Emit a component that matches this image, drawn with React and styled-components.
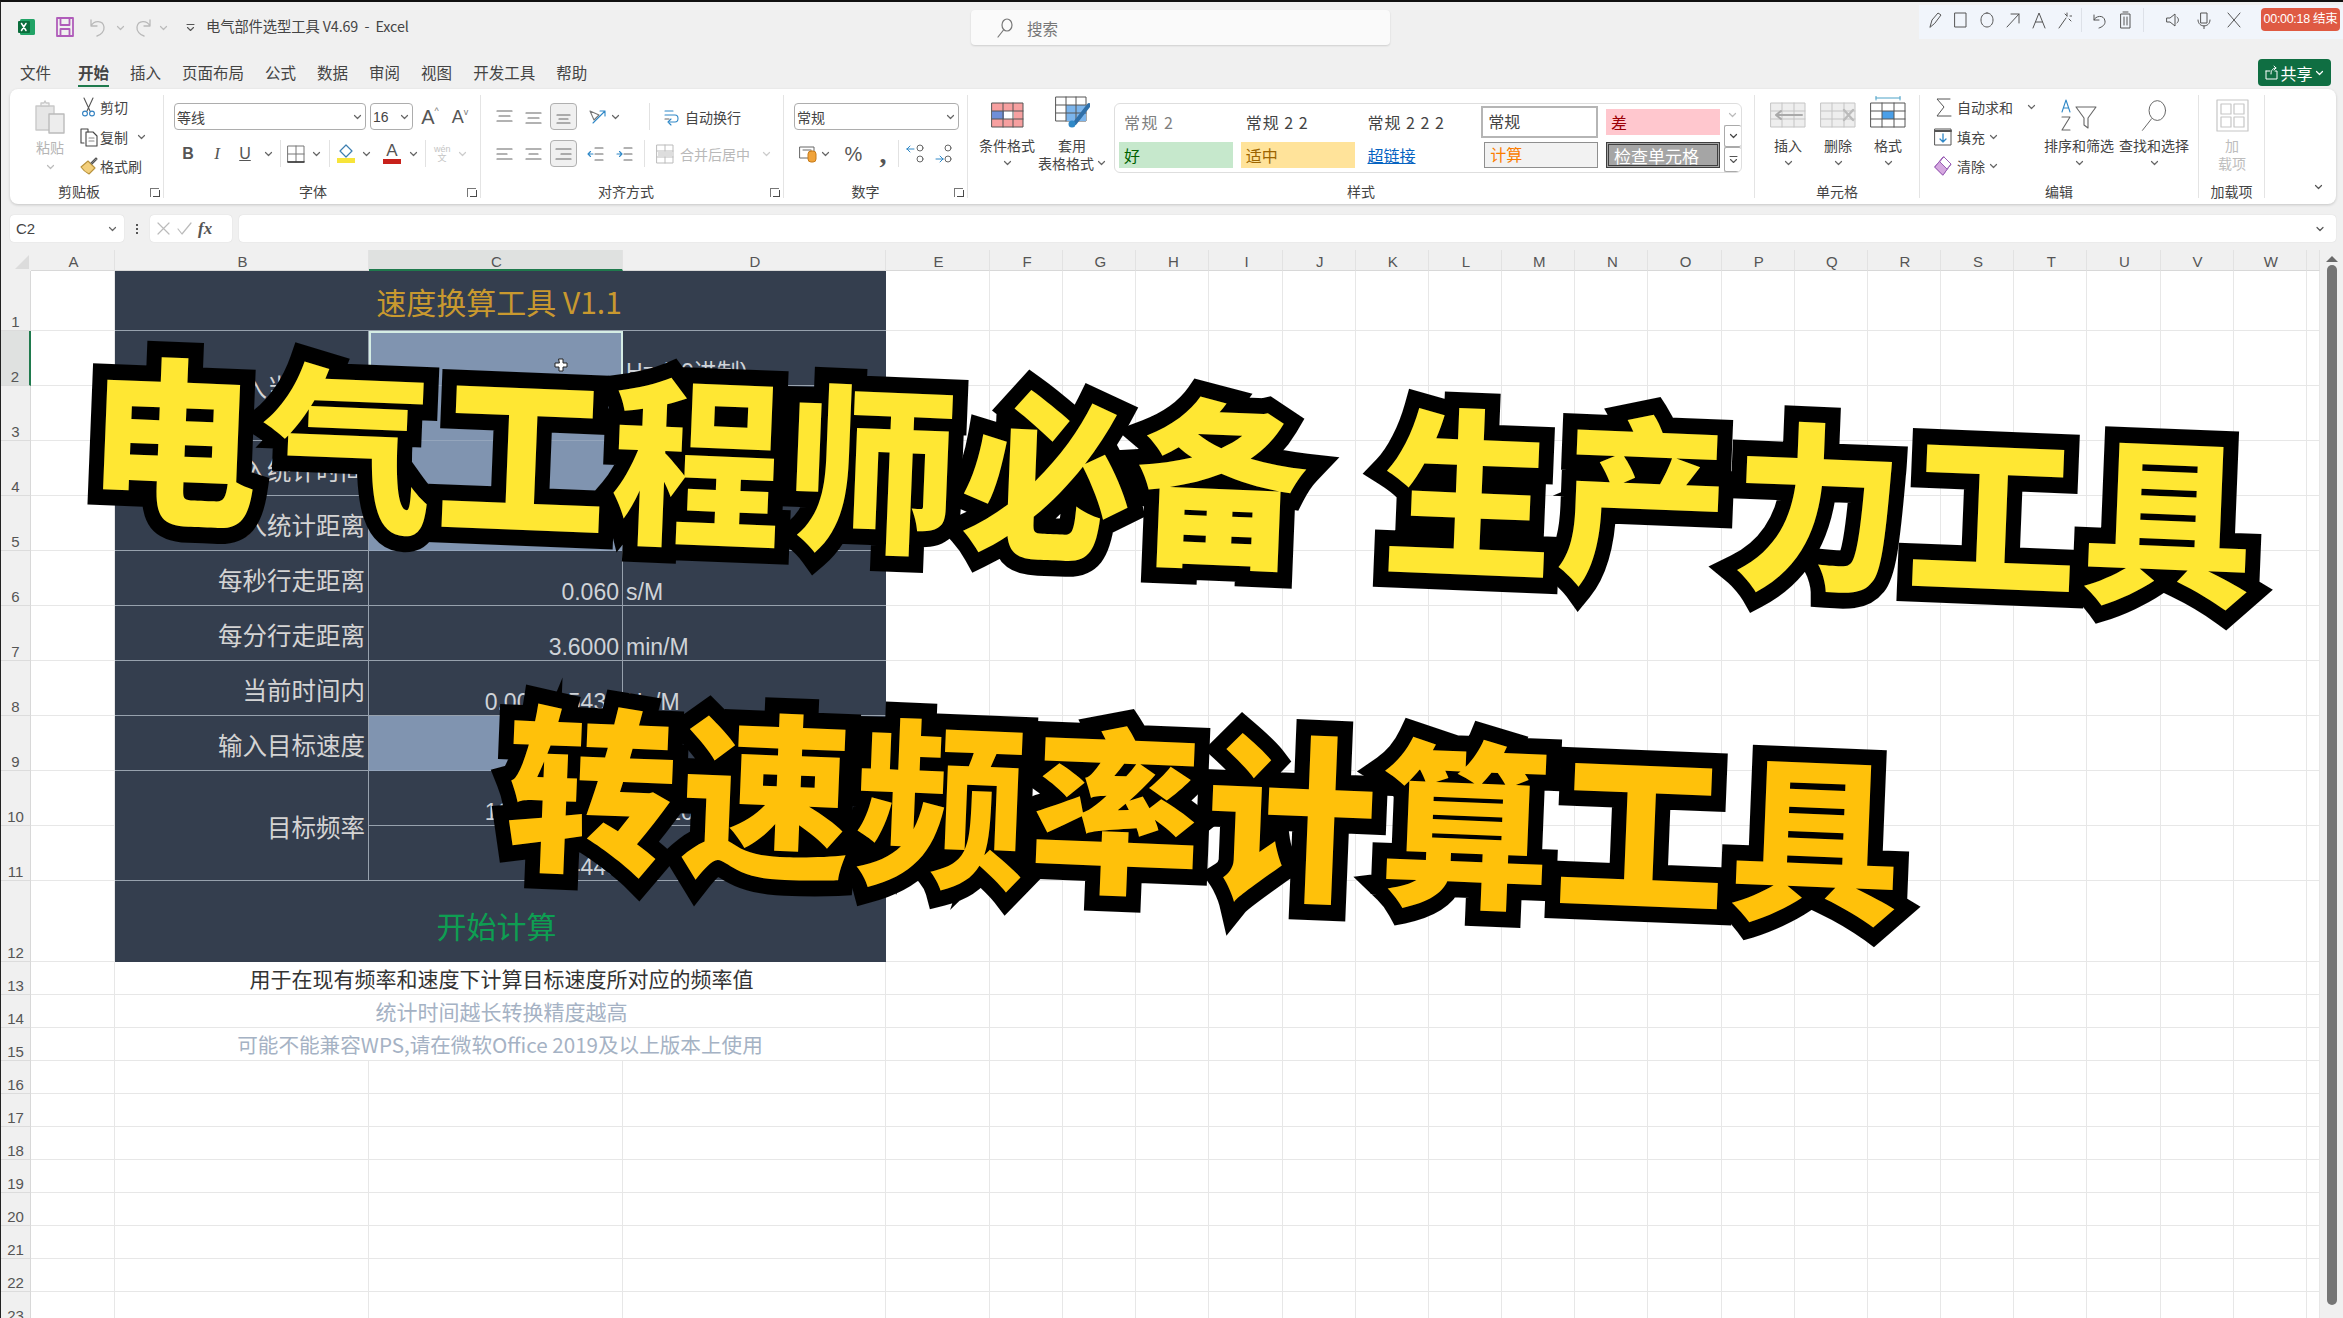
import React from "react";
import styled, { createGlobalStyle } from "styled-components";

const CJK = `"Noto Sans CJK SC", "Liberation Sans", sans-serif`;
const LATIN = `"Liberation Sans", "Noto Sans CJK SC", sans-serif`;

const Global = createGlobalStyle`
  html, body { margin: 0; padding: 0; width: 2343px; height: 1318px; overflow: hidden; background: #f0f0f0; }
  body { font-family: ${CJK}; color: #333; }
  * { box-sizing: border-box; }
`;

const Page = styled.div`
  position: relative; width: 2343px; height: 1318px; overflow: hidden;
  background: #f0f0f0; border-left: 1px solid #222; border-top: 2px solid #111;
  display: flex; flex-direction: column;
`;

/* ---------- icons ---------- */
const Svg = styled.svg`display: block; flex: none;`;
const Ic = ({ w = 18, h = 18, c = "#555", sw = 1.2, children, vb }) => (
  <Svg width={w} height={h} viewBox={vb || `0 0 ${w} ${h}`} fill="none" stroke={c} strokeWidth={sw} strokeLinecap="round" strokeLinejoin="round">{children}</Svg>
);
const Chev = ({ c = "#666", w = 9 }) => (
  <Ic w={w} h={6} c={c} sw={1.2} vb="0 0 9 6"><path d="M1.5 1.5 4.5 4.5 7.5 1.5" /></Ic>
);
const ExcelLogo = () => (
  <Ic w={20} h={20} sw={2}>
    <rect x="2" y="2" width="15" height="16" rx="1.5" fill="#21a366" stroke="none" />
    <rect x="0" y="4" width="12" height="12" rx="1" fill="#0b6e3c" stroke="none" />
    <path d="M3.5 6.5 8 13.5M8 6.5 3.5 13.5" stroke="#fff" strokeWidth="1.5" />
  </Ic>
);
const SaveIco = () => (
  <Ic w={20} h={20} c="#b05cba" sw={1.8}>
    <path d="M2 1h16v18H2z" /><path d="M5.5 1v7h9V1M5.5 19v-7h9v7" />
  </Ic>
);
const UndoIco = ({ flip }) => (
  <Ic w={18} h={20} c="#b9b9b9" sw={1.3}>
    <g transform={flip ? "translate(18 0) scale(-1 1)" : undefined}>
      <path d="M2 3v6h6M2 9c3-6 12-6 13 1 .6 4-3 8-7 9" />
    </g>
  </Ic>
);
const QatIco = () => (
  <Ic w={9} h={9} c="#555" sw={1.1}><path d="M1 1.5h7M1.5 4.5 4.5 7.5 7.5 4.5" /></Ic>
);
const SearchIco = ({ w = 16, h = 20, sw = 1.2, c = "#777" }) => (
  <Ic w={w} h={h} c={c} sw={sw} vb="0 0 16 20">
    <ellipse cx="10" cy="7" rx="5" ry="6" /><path d="M6.5 12 1 19" />
  </Ic>
);
const PasteIco = () => (
  <Ic w={32} h={34} c="#c9c9c9" sw={1.4}>
    <path d="M2 6h18v24H2z" fill="#e6e6e6" /><path d="M7 6V3h3l1-2 1 2h3v3z" fill="#f4f4f4" />
    <path d="M15 14h15v19H15z" fill="#ededed" stroke="#bbb" />
  </Ic>
);
const ScissorIco = () => (
  <Ic w={15} h={20} c="#555" sw={1.1}>
    <path d="M3 1 9 14M12 1 6 14" /><circle cx="4" cy="16.5" r="2.4" stroke="#2f7fc0" /><circle cx="11" cy="16.5" r="2.4" stroke="#2f7fc0" />
  </Ic>
);
const CopyIco = () => (
  <Ic w={18} h={20} c="#444" sw={1.1}>
    <path d="M4 16H1V2h7v3" /><path d="M6 5h7l4 4v10H6z" /><path d="M9 11h5M9 14h5" stroke="#888" />
  </Ic>
);
const BrushIco = () => (
  <Ic w={18} h={18} c="#555" sw={1.1}>
    <path d="M1 10 8 4l7 7-6 6c-2-1-6-4-8-7z" fill="#f3cf7b" stroke="#b8923c" /><path d="M11 6l5-5 1 1-5 5" />
  </Ic>
);
const BordersIco = () => (
  <Ic w={18} h={18} c="#777" sw={1}>
    <path d="M1 1h16v16H1zM9 1v16M1 9h16" /><path d="M1 17h16" stroke="#333" strokeWidth="1.6" />
  </Ic>
);
const FillIco = () => (
  <Ic w={18} h={19} c="#3d7fb0" sw={1.2}>
    <path d="M9 1 3 7l6 6 6-6z" /><rect x="0" y="14" width="18" height="5" fill="#f7e43a" stroke="none" />
  </Ic>
);
const AlignIco = ({ lines, c = "#666" }) => (
  <Ic w={17} h={16} c={c} sw={1.2}>{lines.map((l, i) => <path key={i} d={`M${l[0]} ${l[2]}H${l[1]}`} />)}</Ic>
);
const T3 = [[1, 16, 2], [3, 14, 7], [1, 16, 12]];
const IndentIco = ({ c }) => (
  <Ic w={17} h={16} c="#666" sw={1.1}>
    <path d="M8 2h8M8 8h8M8 14h8" /><path d={c} stroke="#2f88c7" />
  </Ic>
);
const OrientIco = () => (
  <Ic w={20} h={18} c="#777" sw={1.1}><path d="M3 3l9 4-5 5z" /><path d="M6 15 18 3M18 3h-5M18 3v5" stroke="#2f88c7" /></Ic>
);
const WrapIco = () => (
  <Ic w={16} h={20} c="#666" sw={1.1}><path d="M2 4h8M2 8h10c4 0 4 7 0 7H6" stroke="#2f88c7" /><path d="M8 12 5 15l3 3" stroke="#2f88c7" /><path d="M2 12h4" /></Ic>
);
const MergeIco = () => (
  <Ic w={18} h={20} c="#bbb" sw={1}><path d="M1 1h16v18H1zM1 7h16M1 13h16M9 1v6M9 13v6" /><rect x="2" y="8" width="14" height="4" fill="#ddd" stroke="none" /></Ic>
);
const AccIco = () => (
  <Ic w={19} h={20} c="#666" sw={1}>
    <path d="M1 3h14v11H1zM4 6h8" /><rect x="9" y="7" width="8" height="11" rx="3" fill="#f0a33a" stroke="#c77a18" />
  </Ic>
);
const DecIco = ({ rev }) => (
  <Ic w={19} h={22} c="#666" sw={1}>
    {rev ? <path d="M9 6H2M2 6l3-3M2 6l3 3" stroke="#2f88c7" /> : <path d="M2 16h7M9 16l-3-3M9 16l-3 3" stroke="#2f88c7" />}
    <circle cx={rev ? 15 : 14} cy={5} r="3" /><circle cx={rev ? 15 : 14} cy="16" r="3" />
  </Ic>
);
const CondIco = () => (
  <Ic w={33} h={26} c="#555" sw={1}>
    <rect x="1" y="1" width="31" height="24" fill="#f7a0a0" /><rect x="1" y="9" width="12" height="8" fill="#6f8fd8" stroke="none" /><rect x="13" y="9" width="10" height="8" fill="#fff" stroke="none" />
    <path d="M12 1v24M22 1v24M1 9h31M1 17h31" />
  </Ic>
);
const TableIco = () => (
  <Ic w={35} h={32} c="#555" sw={1}>
    <rect x="1" y="1" width="30" height="24" fill="#fff" /><rect x="11" y="9" width="20" height="16" fill="#7cb5ec" stroke="none" />
    <path d="M11 1v24M21 1v24M1 9h30M1 17h30" />
    <path d="M34 9 20 27" stroke="#2f6fa8" strokeWidth="4" /><circle cx="17" cy="28" r="3.5" fill="#2f88c7" stroke="none" />
  </Ic>
);
const CellsIco = ({ kind }) => (
  <Ic w={36} h={kind === "fmt" ? 32 : 26} vb={kind === "fmt" ? "0 -6 36 32" : "0 0 36 26"} c={kind === "fmt" ? "#555" : "#c4c4c4"} sw={1}>
    {kind === "fmt" && <path d="M6 -4h24M6 -6v4M30 -6v4" stroke="#4da2c7" />}
    <rect x="1" y="1" width="34" height="24" fill={kind === "fmt" ? "#fff" : "#eee"} />
    {kind === "fmt" && <rect x="12" y="9" width="12" height="8" fill="#4a9fe8" stroke="none" />}
    <path d="M12 1v24M24 1v24M1 9h34M1 17h34" />
    {kind === "ins" && <path d="M32 13H6M6 13l5-4M6 13l5 4" stroke="#aaa" strokeWidth="2" />}
    {kind === "del" && <path d="M24 8l9 10M33 8l-9 10" stroke="#bbb" strokeWidth="2.4" />}
  </Ic>
);
const SigmaIco = () => (
  <Ic w={17} h={21} c="#555" sw={1}><path d="M15 2H2l7 8-7 9h14" /></Ic>
);
const FillDownIco = () => (
  <Ic w={18} h={20} c="#555" sw={1}><path d="M1 2h16v16H1z" /><path d="M1 4h16" strokeWidth="2" /><path d="M9 7v8M6 12l3 3 3-3" stroke="#2f88c7" strokeWidth="1.3" /></Ic>
);
const EraserIco = () => (
  <Ic w={18} h={20} c="#9a5fb5" sw={1}><path d="M10 1l7 7-8 11-8-8z" /><path d="M1 11l8-10 8 7-8 11z" fill="#d5a8e0" /><path d="M10 1l7 7-4 5-7-7z" fill="#fff" /></Ic>
);
const AddinIco = () => (
  <Ic w={33} h={33} c="#c6c6c6" sw={1.2}><rect x="1" y="1" width="31" height="31" /><rect x="5" y="5" width="10" height="10" /><rect x="18" y="5" width="10" height="10" /><rect x="5" y="18" width="10" height="10" /><rect x="18" y="18" width="10" height="10" /></Ic>
);
const ShareIco = () => (
  <Ic w={13} h={15} c="#fff" sw={1}><path d="M1 6h4M1 6v8h11V6h-2" /><path d="M6 9c0-4 2-6 5-6M9 1l2 2-2 2" /></Ic>
);
const Tool = ({ d, w = 16, h = 18, c = "#555" }) => (
  <Ic w={w} h={h} c={c} sw={1}><path d={d} /></Ic>
);
const PlusCursor = () => (
  <Ic w={14} h={14} c="#222" sw={1}><path d="M5 1h4v4h4v4H9v4H5V9H1V5h4z" fill="#fff" /></Ic>
);

/* ---------- title bar ---------- */
const TitleBar = styled.header`height: 48px; flex: none; display: flex; align-items: flex-start; padding: 15px 0 0 17px;`;
const QatGap = styled.span`width: ${p => p.$w}px; flex: none; display: flex; justify-content: center; padding-top: ${p => p.$pt || 0}px;`;
const DocTitle = styled.span`font-size: 14.3px; line-height: 18px; color: #444; width: 430px; letter-spacing: -.1px; white-space: pre; flex: none;`;
const SearchBox = styled.div`
  width: 419px; height: 35px; margin-top: -7px; background: #fafafa; border-radius: 4px;
  box-shadow: 0 1px 2px rgba(0,0,0,.14); display: flex; align-items: center; padding-left: 26px; gap: 14px;
  font-size: 15.5px; color: #777; flex: none;
`;
const RecBar = styled.div`
  margin: -12px 0 0 auto; width: 424px; height: 34px; background: #f1f5fb; display: flex; align-items: center;
  padding: 0 0 5px 10px; flex: none; position: relative;
`;
const RecSlot = styled.span`width: ${p => p.$w}px; display: flex; justify-content: center; flex: none; margin-left: ${p => p.$ml || 0}px;`;
const RecSep = styled.i`width: 1px; height: 24px; background: #dde1e8; flex: none; margin: 0 ${p => p.$m}px;`;
const Timer = styled.div`
  position: absolute; left: 342px; top: 3px; width: 79px; height: 23px; background: #df5a43; border-radius: 4px; color: #fff;
  font-size: 12.5px; line-height: 23px; text-align: center; white-space: nowrap; font-family: ${LATIN}; letter-spacing: -.3px;
`;

/* ---------- tabs ---------- */
const TabBar = styled.nav`height: 39px; flex: none; display: flex; align-items: flex-end; gap: 21px; padding: 0 12px 2px 19px; position: relative;`;
const Tab = styled.span`
  font-size: 15.5px; height: 27px; line-height: 24px; color: #444; position: relative; flex: none;
  margin-right: ${p => p.$mr || 0}px; font-weight: ${p => p.$on ? 700 : 400};
  &::after { content: ""; display: ${p => p.$on ? "block" : "none"}; position: absolute; left: 0; right: 0; bottom: 0; height: 2px; background: #1f7a4d; }
`;
const ShareBtn = styled.button`
  margin-left: auto; width: 73px; height: 27px; background: #0f6e42; border: 0; border-radius: 4px; color: #fff; font: 16px ${CJK};
  display: flex; align-items: center; justify-content: center; gap: 2px; padding: 0; margin-bottom: 1px; flex: none;
`;

/* ---------- ribbon ---------- */
const Ribbon = styled.section`
  height: 115px; flex: none; margin: 0 7px 0 9px; background: #fff; border-radius: 8px; box-shadow: 0 1px 3px rgba(0,0,0,.18);
  display: flex; padding: 6px 0 0;
`;
const Group = styled.div`
  width: ${p => p.$w}px; flex: none; height: 103px; border-right: 1px solid #e4e4e4; display: flex; flex-direction: column; position: relative;
`;
const Content = styled.div`height: 89px; flex: none; display: flex; padding-left: ${p => p.$pl || 0}px;`;
const GroupLabel = styled.div`height: 14px; line-height: 14px; text-align: center; font-size: 14px; color: #444; position: relative; padding-right: ${p => p.$pr || 0}px;`;
const Launcher = styled.span`
  position: absolute; right: 4px; bottom: 1px; width: 9px; height: 9px; border: 1px solid #777; border-width: 1px 0 0 1px;
  &::after { content: ""; position: absolute; right: -1px; bottom: 0; width: 6px; height: 6px; border: 1px solid #4a4a4a; border-width: 0 1px 1px 0; }
`;
const PasteCol = styled.div`
  width: 60px; display: flex; flex-direction: column; align-items: center; padding-top: 5px; font-size: 14px; color: #b5b5b5; flex: none;
  span { line-height: 20px; margin: 3px 0 7px; }
`;
const SmallList = styled.div`width: ${p => p.$w}px; flex: none; display: flex; flex-direction: column; gap: 9.5px; padding-top: 2px;`;
const SmallRow = styled.div`height: 20px; display: flex; align-items: center; font-size: 14px; color: #444; line-height: 20px; white-space: nowrap;`;
const SmallIcon = styled.span`width: ${p => p.$w || 20}px; margin-right: ${p => p.$mr || 0}px; display: flex; justify-content: center; flex: none;`;
const RowChev = styled.span`margin-left: ${p => p.$ml}px; display: flex;`;
const Stack = styled.div`display: flex; flex-direction: column; gap: 10px; padding-top: 8px; flex: 1; min-width: 0;`;
const CtlRow = styled.div`height: 27px; display: flex; align-items: center;`;
const Select = styled.div`
  width: ${p => p.$w}px; height: 27px; margin-left: ${p => p.$ml || 0}px; border: 1px solid #adadad; border-radius: 4px; background: #fff; flex: none;
  display: flex; align-items: center; justify-content: space-between; padding: 0 3px 0 2px; font: 14px ${LATIN}; color: #444;
`;
const Slot = styled.span`
  width: ${p => p.$w}px; margin-left: ${p => p.$ml || 0}px; flex: none; display: flex; align-items: center; justify-content: center; color: #555;
`;
const Glyph = styled.span`
  font: ${p => p.$i ? "italic " : ""}${p => p.$b ? "700 " : ""}${p => p.$s || 16}px ${p => p.$serif ? `"Liberation Serif"` : LATIN}; color: ${p => p.$c || "#555"};
  text-decoration: ${p => p.$u ? "underline" : "none"}; line-height: 1;
`;
const Sup = styled.sup`font-size: 9px; color: #777; vertical-align: top; line-height: 1;`;
const VSep = styled.i`width: 1px; height: 27px; background: #e2e2e2; flex: none; margin-left: ${p => p.$ml}px;`;
const Pressed = styled.span`
  width: 27px; height: 27px; margin-left: ${p => p.$ml || 0}px; background: #f0f0f0; border: 1px solid #b0b0b0; border-radius: 4px; flex: none;
  display: flex; align-items: center; justify-content: center;
`;
const RowText = styled.span`font-size: 14px; color: ${p => p.$off ? "#b9b9b9" : "#444"}; margin-left: ${p => p.$ml}px; white-space: nowrap; flex: none;`;
const ColorA = styled.span`
  width: 18px; height: 20px; border-bottom: 5px solid ${p => p.$c}; font: 17px ${LATIN}; line-height: 14px; text-align: center; color: #555; flex: none;
  margin-left: ${p => p.$ml}px;
`;
const WenBox = styled.span`width: 16px; margin-left: ${p => p.$ml}px; font: 9px ${LATIN}; line-height: 9px; text-align: center; color: #c4c4c4; flex: none;`;
const BigBtn = styled.div`
  width: ${p => p.$w}px; margin-left: ${p => p.$ml || 0}px; flex: none; display: flex; flex-direction: column; align-items: center;
  font-size: 14px; line-height: 18px; color: ${p => p.$off ? "#bdbdbd" : "#444"}; white-space: nowrap;
`;
const BigIcon = styled.div`height: 41px; display: flex; align-items: flex-end; padding-bottom: ${p => p.$pb ?? 8}px; flex: none;`;
const BigLine = styled.div`height: 18px; display: flex; align-items: center; justify-content: center; gap: 3px;`;
const Gallery = styled.div`
  width: 628px; height: 70px; margin: 8px 0 0 10px; border: 1px solid #dedede; border-radius: 6px; display: flex; flex: none; overflow: hidden;
`;
const StyleGrid = styled.div`
  display: grid; grid-template-columns: repeat(5, 114px); grid-template-rows: 26px 26px; column-gap: 7.75px; row-gap: 7px; padding: 5px 0 0 4px; flex: none; width: 610px;
`;
const StyleChip = styled.div`
  font-size: ${p => p.$fs || 16}px; line-height: 26px; padding-left: ${p => p.$pl ?? 5}px; white-space: pre; overflow: hidden;
  background: ${p => p.$bg || "transparent"}; color: ${p => p.$c || "#444"}; letter-spacing: ${p => p.$ls || 0}px;
  border: ${p => p.$bd || "0"}; text-decoration: ${p => p.$u ? "underline" : "none"};
  ${p => p.$bd ? "line-height: 22px;" : ""}
  ${p => p.$lg ? "margin: -3px 0 0 -3px; height: 32px; line-height: 26px;" : ""}
`;
const GalleryScroll = styled.div`width: 17px; flex: none; display: flex; flex-direction: column; margin-left: -1px;`;
const ScrollBtn = styled.div`
  flex: ${p => p.$f}; display: flex; align-items: center; justify-content: center;
  border: ${p => p.$on ? "1px solid #aaa" : "0"}; border-right: 0; border-radius: 2px;
`;
const Collapse = styled.div`flex: 1; display: flex; align-items: flex-end; justify-content: flex-end; padding: 0 11px 8px 0; height: 103px;`;

/* ---------- formula bar ---------- */
const FormulaBar = styled.div`height: 27px; flex: none; margin: 11px 7px 0 9px; display: flex; align-items: stretch;`;
const NameBox = styled.div`
  width: 114px; background: #fff; border-radius: 4px; display: flex; align-items: center; justify-content: space-between; padding: 0 7px 0 6px; font: 15px ${LATIN}; color: #444;
  box-shadow: 0 0 1px rgba(0,0,0,.2); flex: none;
`;
const Dots = styled.div`width: 26px; flex: none; display: flex; flex-direction: column; align-items: center; justify-content: center; gap: 2px; i { width: 2px; height: 2px; background: #555; }`;
const FxBox = styled.div`
  width: 82px; background: #fff; border-radius: 4px; display: flex; align-items: center; gap: 6px; padding-left: 6px; flex: none; box-shadow: 0 0 1px rgba(0,0,0,.2);
`;
const FxText = styled.span`font: italic 700 17px "Liberation Serif", serif; color: #555;`;
const FormulaInput = styled.div`
  flex: 1; margin-left: 7px; background: #fff; border-radius: 4px; display: flex; align-items: center; justify-content: flex-end; padding-right: 10px; box-shadow: 0 0 1px rgba(0,0,0,.2);
`;

/* ---------- sheet ---------- */
const SheetWrap = styled.div`flex: 1; margin-top: 8px; display: flex; min-height: 0; overflow: hidden;`;
const Sheet = styled.div`
  width: 2319px; flex: none; background: #fff; display: grid;
  grid-template-columns: 30px 84px 254px 254px 263px 104px repeat(18, 73.167px) 13px;
  grid-template-rows: ${p => p.$rows};
`;
const Corner = styled.div`
  background: #f0f0f0; position: relative;
  &::after { content: ""; position: absolute; right: 2px; bottom: 2px; border: 7px solid transparent; border-right-color: #dcdcdc; border-bottom-color: #dcdcdc; }
`;
const ColHead = styled.div`
  background: ${p => p.$on ? "#dfe1e0" : "#f0f0f0"}; border-bottom: ${p => p.$on ? "2px solid #1f7a4d" : "1px solid #d8d8d8"}; border-right: 1px solid #e2e2e2;
  font: 15px ${LATIN}; color: #555; text-align: center; line-height: 23px; padding-left: 2px;
`;
const RowHead = styled.div`
  background: ${p => p.$on ? "#dfe1e0" : "#f0f0f0"}; border-bottom: 1px solid #dcdcdc; border-right: ${p => p.$on ? "2px solid #1f7a4d" : "1px solid #d8d8d8"};
  font: 15px ${LATIN}; color: #555; display: flex; align-items: flex-end; justify-content: center; padding-bottom: 0; line-height: 16px;
`;
const Blank = styled.div`border-right: 1px solid #e7e7e7; border-bottom: 1px solid #e7e7e7;`;
const DarkLine = "#97a1ad";
const Dark = styled.div`
  background: #343e4e; border-bottom: 1px solid ${DarkLine}; border-right: 1px solid ${DarkLine}; color: #d8d8d8;
  overflow: hidden; white-space: nowrap;
`;
const TitleCell = styled(Dark)`
  grid-column: span 3; color: #c9992f; font: 30px ${CJK}; display: flex; align-items: center; justify-content: center; padding-right: 3px;
  border-right: 0;
`;
const LabelCell = styled(Dark)`
  font-size: 24.5px; display: flex; align-items: center; justify-content: flex-end; padding: 3px 3px 0 0; line-height: 30px;
  grid-row: span ${p => p.$rs || 1}; color: #d4d4d4;
`;
const InputCell = styled(Dark)`
  background: #8094b0; border-color: ${p => p.$sel ? "#d5ede4" : "#94a5bc"}; position: relative;
  ${p => p.$sel ? "border: 2px solid #d5ede4; border-bottom: 1px solid #94a5bc;" : ""}
`;
const CursorMark = styled.span`position: absolute; left: 183px; top: 25px;`;
const ValueCell = styled(Dark)`
  font: 23px ${LATIN}; display: flex; align-items: flex-end; justify-content: flex-end; padding: 0 3px 0 0; line-height: 25px; color: #cfd3d8;
`;
const UnitCell = styled(Dark)`
  font: 23px ${LATIN}; display: flex; align-items: flex-end; padding: 0 0 0 3px; line-height: 25px; border-right: 0; color: #cfd3d8;
`;
const ActionCell = styled(Dark)`
  grid-column: span 3; border: 0; color: #0e9e52; font-size: 30px; display: flex; align-items: center; justify-content: center; padding: 6px 8px 0 0;
`;
const NoteCell = styled(Blank)`
  grid-column: span 3; font-size: ${p => p.$fs || 21}px; color: ${p => p.$c || "#333"}; display: flex; align-items: center; justify-content: center;
  white-space: nowrap; overflow: hidden; line-height: 28px; padding-left: ${p => p.$pl || 0}px;
`;
const ScrollTrack = styled.div`flex: 1; background: #f0f0f0; position: relative; display: flex; flex-direction: column; align-items: center; padding-top: 6px;`;
const ScrollUp = styled.span`width: 0; height: 0; border: 6px solid transparent; border-top: 0; border-bottom: 6px solid #6a6a6a; flex: none;`;
const ScrollThumb = styled.span`width: 10px; margin-top: 3px; height: 1040px; background: #757575; border-radius: 5px; flex: none;`;

/* ---------- caption overlay ---------- */
const CaptionLayer = styled.svg`position: absolute; left: 0; top: 0; width: 2343px; height: 1318px; overflow: visible; pointer-events: none;`;
const CaptionLine = styled.text`
  font-family: "Noto Sans CJK SC", sans-serif; font-weight: 900; font-size: 170px;
  letter-spacing: ${p => p.$ls}px; word-spacing: 28px; white-space: pre;
  fill: ${p => p.$c}; stroke: #000; stroke-width: 30px; paint-order: stroke fill;
  stroke-linejoin: miter; stroke-miterlimit: 9;
`;

const COLS = ["A","B","C","D","E","F","G","H","I","J","K","L","M","N","O","P","Q","R","S","T","U","V","W",""];
const HEIGHTS = [60,55,55,55,55,55,55,55,55,55,55,81,33,33,33,33,33,33,33,33,33,33,33];
const TRAIL = Array.from({ length: 20 }, (_, i) => i);

const darkRows = {
  2: [<LabelCell key="b" $rs={2}>输入当前频率</LabelCell>, <InputCell key="c" $sel><CursorMark><PlusCursor /></CursorMark></InputCell>, <UnitCell key="d">Hz (10进制)</UnitCell>],
  3: [<InputCell key="c" />, <UnitCell key="d">M/min</UnitCell>],
  4: [<LabelCell key="b">输入统计时间</LabelCell>, <InputCell key="c" />, <UnitCell key="d">s</UnitCell>],
  5: [<LabelCell key="b">输入统计距离</LabelCell>, <InputCell key="c" />, <UnitCell key="d">M</UnitCell>],
  6: [<LabelCell key="b">每秒行走距离</LabelCell>, <ValueCell key="c">0.060</ValueCell>, <UnitCell key="d">s/M</UnitCell>],
  7: [<LabelCell key="b">每分行走距离</LabelCell>, <ValueCell key="c">3.6000</ValueCell>, <UnitCell key="d">min/M</UnitCell>],
  8: [<LabelCell key="b">当前时间内</LabelCell>, <ValueCell key="c">0.000015430</ValueCell>, <UnitCell key="d">Hz/M</UnitCell>],
  9: [<LabelCell key="b">输入目标速度</LabelCell>, <InputCell key="c" />, <UnitCell key="d">M/min</UnitCell>],
  10: [<LabelCell key="b" $rs={2}>目标频率</LabelCell>, <ValueCell key="c">16.66666670</ValueCell>, <UnitCell key="d">Hz (10进制)</UnitCell>],
  11: [<ValueCell key="c">4440</ValueCell>, <UnitCell key="d">Hz</UnitCell>],
};

function rowCells(r) {
  if (r === 1) return [<TitleCell key="t">速度换算工具 V1.1</TitleCell>];
  if (darkRows[r]) return darkRows[r];
  if (r === 12) return [<ActionCell key="a">开始计算</ActionCell>];
  if (r === 13) return [<NoteCell key="n" $pl={3}>用于在现有频率和速度下计算目标速度所对应的频率值</NoteCell>];
  if (r === 14) return [<NoteCell key="n" $c="#a5b2c4" $pl={3}>统计时间越长转换精度越高</NoteCell>];
  if (r === 15) return [<NoteCell key="n" $c="#a5b2c4" $fs={20.6}>可能不能兼容WPS,请在微软Office 2019及以上版本上使用</NoteCell>];
  return [<Blank key="b" />, <Blank key="c" />, <Blank key="d" />];
}

export default function App() {
  return (
    <Page>
      <Global />
      <TitleBar>
        <ExcelLogo />
        <QatGap $w={17} />
        <SaveIco />
        <QatGap $w={14} />
        <UndoIco />
        <QatGap $w={27} $pt={8}><Chev c="#bbb" /></QatGap>
        <UndoIco flip />
        <QatGap $w={22} $pt={8}><Chev c="#bbb" /></QatGap>
        <QatGap $w={32} $pt={6}><QatIco /></QatGap>
        <DocTitle>电气部件选型工具 V4.69  -  Excel</DocTitle>
        <QatGap $w={335} />
        <SearchBox><SearchIco />搜索</SearchBox>
        <RecBar>
          <RecSlot $w={14}><Tool d="M2 16 4 9 10 2l3 2-6 8z" /></RecSlot>
          <RecSlot $w={16} $ml={10}><Tool d="M2 2h11v14H2z" /></RecSlot>
          <RecSlot $w={16} $ml={10}><Tool d="M8 2c3.5 0 6 3 6 7s-2.500 7-6 7-6-3-6-7 2.500-7 6-7z" /></RecSlot>
          <RecSlot $w={16} $ml={10}><Tool d="M2 16 14 3M6 3h8v9" /></RecSlot>
          <RecSlot $w={16} $ml={10}><Tool d="M2 17 8 2l6 15M4.500 11h7" /></RecSlot>
          <RecSlot $w={16} $ml={9}><Tool d="M3 17 10 7M11 2v3M14 5h3M9 3l2 2M13 8l2 2" /></RecSlot>
          <RecSep $m={9} />
          <RecSlot $w={16} $ml={1}><Tool d="M2 4v5h5M2 9c1-4 10-6 11 1 .5 4-3 6-6 7" /></RecSlot>
          <RecSlot $w={14} $ml={11}><Tool d="M3 3h9v14H3zM5 1h5M6 6v8M9 6v8" /></RecSlot>
          <RecSep $m={10} />
          <RecSlot $w={18} $ml={10}><Tool d="M2 7h3l5-4v12l-5-4H2zM12 6c2 2 2 4 0 6" /></RecSlot>
          <RecSlot $w={18} $ml={12}><Tool d="M6 2h6v10H6zM3 9c0 8 12 8 12 0M9 15v3" /></RecSlot>
          <RecSlot $w={16} $ml={14}><Tool d="M2 2 14 16M14 2 2 16" /></RecSlot>
          <Timer>00:00:18 结束</Timer>
        </RecBar>
      </TitleBar>

      <TabBar>
        <Tab $mr={6}>文件</Tab>
        <Tab $on>开始</Tab>
        <Tab>插入</Tab>
        <Tab>页面布局</Tab>
        <Tab>公式</Tab>
        <Tab>数据</Tab>
        <Tab>审阅</Tab>
        <Tab>视图</Tab>
        <Tab>开发工具</Tab>
        <Tab>帮助</Tab>
        <ShareBtn><ShareIco />共享<Chev c="#fff" /></ShareBtn>
      </TabBar>

      <Ribbon>
        <Group $w={154}>
          <Content $pl={10}>
            <PasteCol><PasteIco /><span>粘贴</span><Chev c="#bbb" /></PasteCol>
            <SmallList $w={80}>
              <SmallRow><SmallIcon $w={16} $mr={4}><ScissorIco /></SmallIcon>剪切</SmallRow>
              <SmallRow><SmallIcon $w={18} $mr={2}><CopyIco /></SmallIcon>复制<RowChev $ml={9}><Chev /></RowChev></SmallRow>
              <SmallRow><SmallIcon $w={18} $mr={2}><BrushIco /></SmallIcon>格式刷</SmallRow>
            </SmallList>
          </Content>
          <GroupLabel $pr={15}>剪贴板<Launcher /></GroupLabel>
        </Group>

        <Group $w={317}>
          <Content>
            <Stack>
              <CtlRow>
                <Select $w={192} $ml={10}>等线<Chev /></Select>
                <Select $w={43} $ml={4}>16<Chev /></Select>
                <Slot $w={18} $ml={8}><Glyph $s={20}>A<Sup>^</Sup></Glyph></Slot>
                <Slot $w={16} $ml={13}><Glyph $s={18}>A<Sup>v</Sup></Glyph></Slot>
              </CtlRow>
              <CtlRow>
                <Slot $w={16} $ml={16}><Glyph $b $s={16}>B</Glyph></Slot>
                <Slot $w={16} $ml={13}><Glyph $i $serif $s={17}>I</Glyph></Slot>
                <Slot $w={16} $ml={12}><Glyph $u $s={16}>U</Glyph></Slot>
                <Slot $w={12} $ml={9}><Chev /></Slot>
                <VSep $ml={6} />
                <Slot $w={18} $ml={6}><BordersIco /></Slot>
                <Slot $w={12} $ml={5}><Chev /></Slot>
                <VSep $ml={7} />
                <Slot $w={18} $ml={7}><FillIco /></Slot>
                <Slot $w={12} $ml={5}><Chev /></Slot>
                <ColorA $c="#c8211b" $ml={11}>A</ColorA>
                <Slot $w={12} $ml={6}><Chev /></Slot>
                <VSep $ml={6} />
                <WenBox $ml={8}>wén<br />文</WenBox>
                <Slot $w={12} $ml={6}><Chev c="#ccc" /></Slot>
              </CtlRow>
            </Stack>
          </Content>
          <GroupLabel $pr={18}>字体<Launcher /></GroupLabel>
        </Group>

        <Group $w={303}>
          <Content>
            <Stack>
              <CtlRow>
                <Slot $w={17} $ml={15}><AlignIco lines={T3} /></Slot>
                <Slot $w={17} $ml={12}><AlignIco lines={[[1,16,4],[3,14,9],[1,16,14]]} /></Slot>
                <Pressed $ml={8}><AlignIco lines={[[2,15,6],[4,13,10],[2,15,14]]} /></Pressed>
                <Slot $w={20} $ml={10}><OrientIco /></Slot>
                <Slot $w={9} $ml={4}><Chev /></Slot>
                <VSep $ml={29} />
                <Slot $w={16} $ml={13}><WrapIco /></Slot>
                <RowText $ml={6}>自动换行</RowText>
              </CtlRow>
              <CtlRow>
                <Slot $w={17} $ml={15}><AlignIco lines={[[1,16,3],[1,11,8],[1,16,13]]} /></Slot>
                <Slot $w={17} $ml={12}><AlignIco lines={[[1,16,3],[4,13,8],[1,16,13]]} /></Slot>
                <Pressed $ml={8}><AlignIco lines={[[1,16,3],[6,16,8],[1,16,13]]} /></Pressed>
                <Slot $w={17} $ml={10}><IndentIco c="M6 8H1M1 8l2.500-2.500M1 8l2.500 2.500" /></Slot>
                <Slot $w={17} $ml={12}><IndentIco c="M1 8h5M6 8 3.500 5.500M6 8l-2.500 2.500" /></Slot>
                <VSep $ml={11} />
                <Slot $w={18} $ml={11}><MergeIco /></Slot>
                <RowText $off $ml={6}>合并后居中</RowText>
                <Slot $w={9} $ml={12}><Chev c="#ccc" /></Slot>
              </CtlRow>
            </Stack>
          </Content>
          <GroupLabel $pr={12}>对齐方式<Launcher /></GroupLabel>
        </Group>

        <Group $w={184}>
          <Content>
            <Stack>
              <CtlRow><Select $w={165} $ml={10}>常规<Chev /></Select></CtlRow>
              <CtlRow>
                <Slot $w={19} $ml={15}><AccIco /></Slot>
                <Slot $w={9} $ml={3}><Chev /></Slot>
                <Slot $w={19} $ml={14}><Glyph $s={20}>%</Glyph></Slot>
                <Slot $w={10} $ml={15}><Glyph $b $s={28} $serif>,</Glyph></Slot>
                <VSep $ml={10} />
                <Slot $w={19} $ml={6}><DecIco rev /></Slot>
                <Slot $w={19} $ml={10}><DecIco /></Slot>
              </CtlRow>
            </Stack>
          </Content>
          <GroupLabel $pr={20}>数字<Launcher /></GroupLabel>
        </Group>

        <Group $w={787}>
          <Content $pl={10}>
            <BigBtn $w={58}>
              <BigIcon><CondIco /></BigIcon>
              <BigLine>条件格式</BigLine>
              <BigLine><Chev /></BigLine>
            </BigBtn>
            <BigBtn $w={64} $ml={4}>
              <BigIcon><TableIco /></BigIcon>
              <BigLine>套用</BigLine>
              <BigLine>表格格式<Chev /></BigLine>
            </BigBtn>
            <Gallery>
              <StyleGrid>
                <StyleChip $c="#808080" $ls={1.5}>常规 2</StyleChip>
                <StyleChip $ls={1}>常规 2 2</StyleChip>
                <StyleChip $ls={1}>常规 2 2 2</StyleChip>
                <StyleChip $bg="#fff" $bd="2px solid #b5b5b5" $lg>常规</StyleChip>
                <StyleChip $bg="#ffc7ce" $c="#9c0006">差</StyleChip>
                <StyleChip $bg="#c6e8cc" $c="#006100">好</StyleChip>
                <StyleChip $bg="#ffe39a" $c="#9c6500">适中</StyleChip>
                <StyleChip $c="#0563c1" $u>超链接</StyleChip>
                <StyleChip $bg="#f2f2f2" $c="#fa7d00" $bd="1px solid #8f8f8f">计算</StyleChip>
                <StyleChip $bg="#a5a5a5" $c="#fff" $bd="3px double #3f3f3f" $fs={17}>检查单元格</StyleChip>
              </StyleGrid>
              <GalleryScroll>
                <ScrollBtn $f={23}><Chev c="#bbb" /></ScrollBtn>
                <ScrollBtn $f={21} $on><Chev c="#444" /></ScrollBtn>
                <ScrollBtn $f={25} $on><QatIco /></ScrollBtn>
              </GalleryScroll>
            </Gallery>
          </Content>
          <GroupLabel>样式</GroupLabel>
        </Group>

        <Group $w={165}>
          <Content $pl={8}>
            <BigBtn $w={50}><BigIcon><CellsIco kind="ins" /></BigIcon><BigLine>插入</BigLine><BigLine><Chev /></BigLine></BigBtn>
            <BigBtn $w={50}><BigIcon><CellsIco kind="del" /></BigIcon><BigLine>删除</BigLine><BigLine><Chev /></BigLine></BigBtn>
            <BigBtn $w={50}><BigIcon><CellsIco kind="fmt" /></BigIcon><BigLine>格式</BigLine><BigLine><Chev /></BigLine></BigBtn>
          </Content>
          <GroupLabel>单元格</GroupLabel>
        </Group>

        <Group $w={279}>
          <Content $pl={14}>
            <SmallList $w={110}>
              <SmallRow><SmallIcon $w={18} $mr={5}><SigmaIco /></SmallIcon>自动求和<RowChev $ml={14}><Chev /></RowChev></SmallRow>
              <SmallRow><SmallIcon $w={18} $mr={5}><FillDownIco /></SmallIcon>填充<RowChev $ml={4}><Chev /></RowChev></SmallRow>
              <SmallRow><SmallIcon $w={18} $mr={5}><EraserIco /></SmallIcon>清除<RowChev $ml={4}><Chev /></RowChev></SmallRow>
            </SmallList>
            <BigBtn $w={70}>
              <BigIcon $pb={4}>
                <Ic w={36} h={34} c="#666" sw={1.1}>
                  <path d="M1 14 5 2l4 12M2.500 10h5" stroke="#2f88c7" /><path d="M1 19h8L1 32h8" /><path d="M15 9h20l-8 11v10l-4-3v-7z" />
                </Ic>
              </BigIcon>
              <BigLine>排序和筛选</BigLine><BigLine><Chev /></BigLine>
            </BigBtn>
            <BigBtn $w={70} $ml={5}>
              <BigIcon $pb={4}><SearchIco w={34} h={33} sw={.6} c="#666" /></BigIcon>
              <BigLine>查找和选择</BigLine><BigLine><Chev /></BigLine>
            </BigBtn>
          </Content>
          <GroupLabel>编辑</GroupLabel>
        </Group>

        <Group $w={66}>
          <Content>
            <BigBtn $w={66} $off>
              <BigIcon $pb={4}><AddinIco /></BigIcon>
              <BigLine>加</BigLine><BigLine>载项</BigLine>
            </BigBtn>
          </Content>
          <GroupLabel>加载项</GroupLabel>
        </Group>

        <Collapse><Chev c="#555" w={13} /></Collapse>
      </Ribbon>

      <FormulaBar>
        <NameBox>C2<Chev /></NameBox>
        <Dots><i /><i /><i /></Dots>
        <FxBox>
          <Ic w={15} h={15} c="#bbb"><path d="M2 2 13 13M13 2 2 13" /></Ic>
          <Ic w={15} h={15} c="#bbb"><path d="M1 8 5 13 14 2" /></Ic>
          <FxText>fx</FxText>
        </FxBox>
        <FormulaInput><Chev c="#555" w={12} /></FormulaInput>
      </FormulaBar>

      <SheetWrap>
        <Sheet $rows={`21px ${HEIGHTS.map(h => `${h}px`).join(" ")}`}>
          <Corner />
          {COLS.map((c, i) => <ColHead key={i} $on={c === "C"}>{c}</ColHead>)}
          {HEIGHTS.map((_, i) => {
            const r = i + 1;
            return (
              <React.Fragment key={r}>
                <RowHead $on={r === 2}>{r}</RowHead>
                <Blank />
                {rowCells(r)}
                {TRAIL.map(t => <Blank key={`t${t}`} />)}
              </React.Fragment>
            );
          })}
        </Sheet>
        <ScrollTrack><ScrollUp /><ScrollThumb /></ScrollTrack>
      </SheetWrap>

      <CaptionLayer>
        <CaptionLine $c="#ffe733" $ls={5} transform="translate(84 505) rotate(2.3) scale(1 1.06)">电气工程师必备 生产力工具</CaptionLine>
        <CaptionLine $c="#ffc10a" $ls={5} transform="translate(503 853) rotate(2.3) scale(1 1.05)">转速频率计算工具</CaptionLine>
      </CaptionLayer>
    </Page>
  );
}
